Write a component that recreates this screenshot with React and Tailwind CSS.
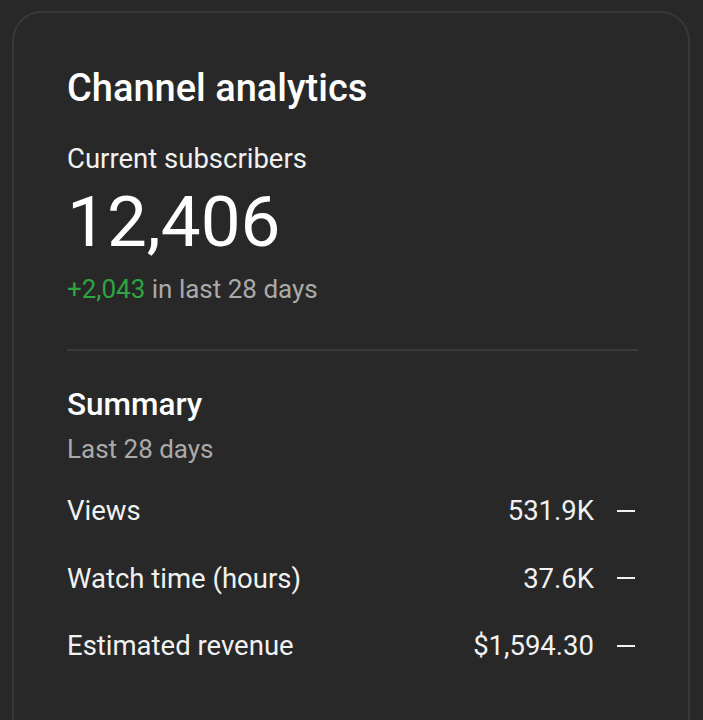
import React from 'react';

const rows = [
  { label: 'Views', value: '531.9K' },
  { label: 'Watch time (hours)', value: '37.6K' },
  { label: 'Estimated revenue', value: '$1,594.30' },
];

const App = () => {
  return (
    <div
      className="w-[703px] h-[720px] overflow-hidden bg-[#282828] pt-[11px] pl-[12px] pr-[13px]"
      style={{ fontFamily: 'Roboto, "Noto Sans", sans-serif' }}
    >
      <div className="h-[760px] rounded-[30px] border-2 border-[#383838] bg-[#282828] pl-[53px] pr-[53px] pt-[53px]">
        <h1 className="text-[38px] leading-[44px] font-medium text-white">Channel analytics</h1>

        <div className="mt-[33px] text-[27.5px] leading-[32px] text-[#f1f1f1]">Current subscribers</div>
        <div className="mt-[7px] text-[71px] leading-[80px] text-white">12,406</div>
        <div className="mt-[11px] text-[26px] leading-[32px] text-[#aaaaaa]">
          <span className="text-[#2ba640]">+2,043</span> in last 28 days
        </div>

        <div className="mt-[44px] h-[2px] bg-[#3a3a3a] mr-[-3px]" />

        <h2 className="mt-[34px] text-[31.5px] leading-[40px] font-medium text-white">Summary</h2>
        <div className="mt-[8px] text-[26px] leading-[32px] text-[#aaaaaa]">Last 28 days</div>

        <div className="mt-[12px] flex flex-col">
          {rows.map((r) => (
            <div key={r.label} className="h-[67.5px] flex items-center justify-between text-[27.5px] text-[#f1f1f1]">
              <span>{r.label}</span>
              <div className="flex items-center gap-[23px]">
                <span>{r.value}</span>
                <span className="block w-[18px] h-[2px] bg-[#f1f1f1]" />
              </div>
            </div>
          ))}
        </div>
      </div>
    </div>
  );
};

export default App;
